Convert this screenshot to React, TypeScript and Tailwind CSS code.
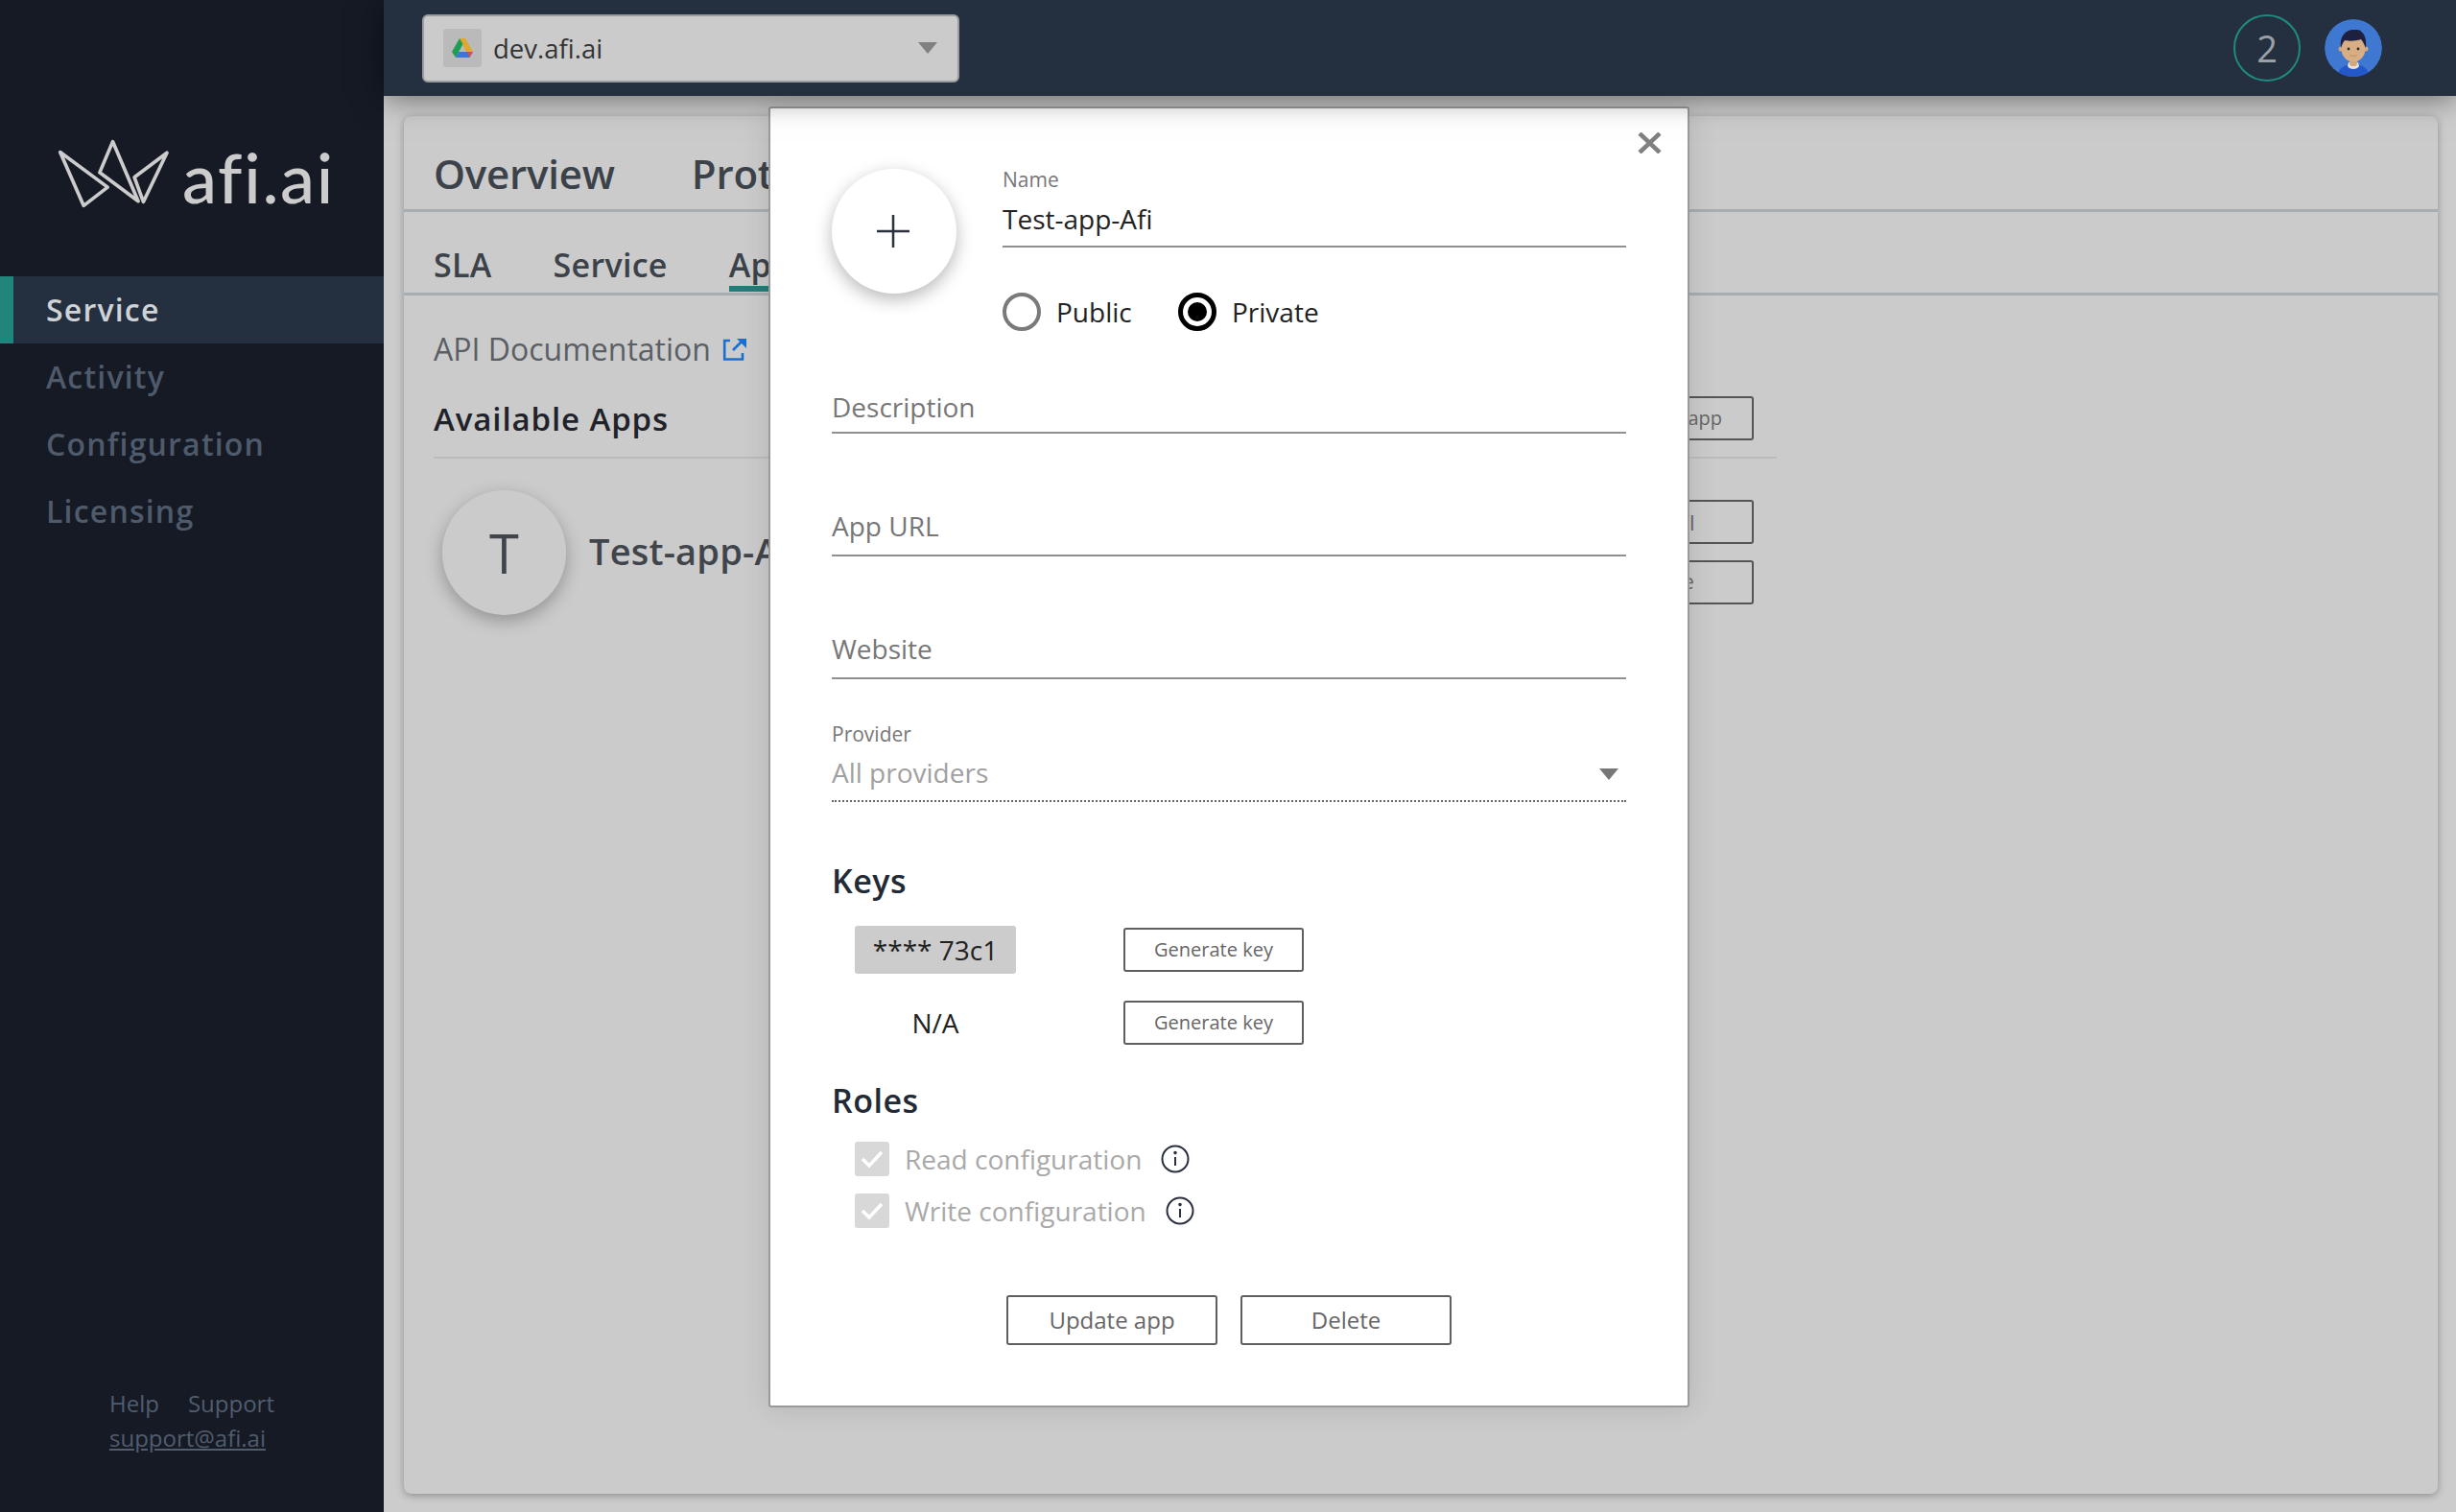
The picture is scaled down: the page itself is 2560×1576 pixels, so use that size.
const navItems = ["Service", "Activity", "Configuration", "Licensing"];

const CrownLogo = () => (
  <svg width="123" height="77" viewBox="50 70 370 230" fill="none" stroke="#cccccc" strokeWidth="11" strokeLinejoin="round">
    <path d="M67 116 L216 226 L141 284 Z" />
    <path d="M232 83 L312 270 L191 180 Z" />
    <path d="M402 118 L328 272 L300 195 Z" />
  </svg>
);

const DriveIcon = () => (
  <svg width="22" height="20" viewBox="0 0 22 20">
    <path d="M8 0 H14 L22 14 H15 Z" fill="#e0a830" />
    <path d="M7 14 H22 L18 20 H4 Z" fill="#3b77d9" />
    <path d="M16 14 H22 L18.5 20 Z" fill="#d9503f" />
    <path d="M8 0 L11.5 6 L4 20 L0 14 Z" fill="#1f9d55" />
  </svg>
);

const ExternalIcon = () => (
  <svg width="26" height="25" viewBox="0 0 26 25" fill="none" stroke="#1a6fd0" strokeWidth="2.6">
    <path d="M8 3 H2.2 V22.5 H21 V16" />
    <path d="M11 13 L20 4" />
    <path d="M15 1 H25 V11 Z" fill="#1a6fd0" stroke="none" />
  </svg>
);

const Avatar = () => (
  <svg width="60" height="60" viewBox="0 0 60 60" className="rounded-full">
    <circle cx="30" cy="30" r="30" fill="#3f78d0" />
    <path d="M13 60 C14 51 21 47 30 47 C39 47 46 51 47 60 Z" fill="#2458c8" />
    <path d="M24 49 C26 53 34 53 36 49 L35 45 H25 Z" fill="#e8e4dc" />
    <rect x="26" y="38" width="8" height="11" rx="3" fill="#d2a77e" />
    <circle cx="17" cy="31" r="2.5" fill="#d2a77e" />
    <circle cx="43" cy="31" r="2.5" fill="#d2a77e" />
    <ellipse cx="30" cy="31" rx="12.5" ry="13.5" fill="#d8ae84" />
    <path d="M17 30 C15 18 22 11 30 11 C33 11 38 11 38 13 C42 15 44 22 43 30 C41 26 40 23 38 21 C32 23 24 23 21 22 C19 24 18 27 17 30 Z" fill="#1e2040" />
    <circle cx="25" cy="31" r="1.4" fill="#2a2a3a" />
    <circle cx="35" cy="31" r="1.4" fill="#2a2a3a" />
    <path d="M26 37 C28 39 32 39 34 37" stroke="#c08f68" strokeWidth="1" fill="none" />
  </svg>
);

const Caret = ({ color }: { color: string }) => (
  <svg width="20" height="12" viewBox="0 0 20 12">
    <path d="M0 0 H20 L10 12 Z" fill={color} />
  </svg>
);

const InfoIcon = () => (
  <svg width="30" height="30" viewBox="0 0 30 30" fill="none" stroke="#2a3040" strokeWidth="2">
    <circle cx="15" cy="15" r="13.5" />
    <path d="M15 13 V22" />
    <circle cx="15" cy="8.6" r="0.8" fill="#2a3040" />
  </svg>
);

const CheckIcon = () => (
  <svg width="24" height="20" viewBox="0 0 24 20" fill="none" stroke="#ffffff" strokeWidth="3.5">
    <path d="M2 10 L9 17 L22 3" />
  </svg>
);

const OutlineBtn = ({ label, className }: { label: string; className: string }) => (
  <button className={`flex items-center justify-center whitespace-nowrap rounded-[3px] border-2 border-[#5f5f5f] text-[#666666] ${className}`}>
    {label}
  </button>
);

const Field = ({ label, className }: { label: string; className: string }) => (
  <div className={`flex items-center border-b-2 border-[#8f8f8f] text-[28px] text-[#777777] ${className}`}>
    {label}
  </div>
);

const RoleRow = ({ label, className }: { label: string; className: string }) => (
  <div className={`flex h-9 items-center pl-6 ${className}`}>
    <div className="flex h-9 w-9 items-center justify-center rounded-[3px] bg-[#d8d8d8]">
      <CheckIcon />
    </div>
    <span className="ml-4 text-[28px] text-[#a9a9a9]">{label}</span>
    <span className="ml-5 flex">
      <InfoIcon />
    </span>
  </div>
);

const AppModal = () => (
  <div className="absolute left-[801px] top-[111px] h-[1356px] w-[960px] rounded-[3px] border-2 border-[#9a9a9a] bg-white px-[64px] pt-[63px] shadow-[0_0_30px_rgba(0,0,0,0.12)]">
    <svg className="absolute left-[904px] top-[25px]" width="25" height="22" viewBox="0 0 25 22" stroke="#808080" strokeWidth="4.5">
      <path d="M2 1 L23 21 M23 1 L2 21" />
    </svg>

    <div className="flex gap-[48px]">
      <div className="flex h-[130px] w-[130px] shrink-0 items-center justify-center rounded-full bg-white pr-[2px] shadow-[0_6px_18px_rgba(0,0,0,0.28)]">
        <svg width="34" height="34" viewBox="0 0 34 34" stroke="#2a3040" strokeWidth="2.5">
          <path d="M17 0 V34 M0 17 H34" />
        </svg>
      </div>
      <div className="flex-1">
        <div className="mt-[-1px] h-[25px] text-[21px] leading-6 text-[#777777]">Name</div>
        <div className="flex h-[58px] items-center border-b-2 border-[#8f8f8f] text-[28px] text-[#222222]">Test-app-Afi</div>
        <div className="mt-[47px] flex h-10 items-center text-[28px] text-[#222222]">
          <span className="h-10 w-10 rounded-full border-4 border-[#7a7a7a]" />
          <span className="ml-[16px] w-[127px]">Public</span>
          <span className="flex h-10 w-10 items-center justify-center rounded-full border-[5px] border-black">
            <span className="h-5 w-5 rounded-full bg-black" />
          </span>
          <span className="ml-[16px]">Private</span>
        </div>
      </div>
    </div>

    <Field label="Description" className="mt-[53px] h-[54px]" />
    <Field label="App URL" className="mt-[68px] h-[60px] pb-[2px]" />
    <Field label="Website" className="mt-[66px] h-[62px]" />

    <div className="mt-[45px] h-6 text-[21px] leading-6 text-[#777777]">Provider</div>
    <div className="flex h-[59px] items-center justify-between border-b-2 border-dotted border-[#666666] pb-[2px] pr-[8px] text-[28px] text-[#a0a0a0]">
      All providers
      <span className="mt-[4px] flex">
        <Caret color="#777777" />
      </span>
    </div>

    <div className="mt-[60px] flex h-11 items-center text-[34px] font-semibold tracking-[0.5px] text-[#222a35]">Keys</div>
    <div className="mt-[25px] flex items-center pl-6">
      <div className="flex h-[50px] w-[168px] items-center justify-center rounded-[3px] bg-[#cccccc] text-[28px] text-[#222222]">**** 73c1</div>
      <OutlineBtn label="Generate key" className="ml-[112px] h-[46px] w-[188px] text-[20px]" />
    </div>
    <div className="mt-[28px] flex items-center pl-6">
      <div className="flex w-[168px] justify-center text-[28px] text-[#222222]">N/A</div>
      <OutlineBtn label="Generate key" className="ml-[112px] h-[46px] w-[188px] text-[20px]" />
    </div>

    <div className="mt-[36px] flex h-11 items-center text-[34px] font-semibold tracking-[0.5px] text-[#222a35]">Roles</div>
    <RoleRow label="Read configuration" className="mt-[21px]" />
    <RoleRow label="Write configuration" className="mt-[18px]" />

    <div className="mt-[70px] flex justify-center gap-6">
      <OutlineBtn label="Update app" className="h-[52px] w-[220px] text-[24px]" />
      <OutlineBtn label="Delete" className="h-[52px] w-[220px] text-[24px]" />
    </div>
  </div>
);

export default function App() {
  return (
    <div className="relative flex h-[1576px] w-[2560px] overflow-hidden bg-[#cccccc] font-['Open_Sans',sans-serif]">
      <aside className="flex w-[400px] shrink-0 flex-col bg-[#151a25]">
        <div className="flex h-[288px] items-start pl-[57px] pt-[143px]">
          <CrownLogo />
          <span className="ml-[10px] mt-[-2px] font-['Lato',sans-serif] text-[72px] font-medium leading-[86px] tracking-[1.7px] text-[#cccccc]">afi.ai</span>
        </div>
        <nav className="flex flex-col">
          {navItems.map((item, i) => (
            <div
              key={item}
              className={
                i === 0
                  ? "flex h-[70px] items-center border-l-[14px] border-[#22857d] bg-[#24303f] pl-[34px] text-[32px] font-semibold tracking-[1.2px] text-[#cfd2d6]"
                  : "flex h-[70px] items-center pl-[48px] text-[32px] font-semibold tracking-[1.2px] text-[#4f5a6b]"
              }
            >
              {item}
            </div>
          ))}
        </nav>
        <div className="mt-auto pb-[59px] pl-[114px] text-[24px] leading-[36px] text-[#515c6d]">
          <div className="flex gap-[30px]">
            <span>Help</span>
            <span>Support</span>
          </div>
          <div className="underline">support@afi.ai</div>
        </div>
      </aside>

      <div className="flex min-w-0 flex-1 flex-col">
        <header className="relative z-10 flex h-[100px] shrink-0 items-center bg-[#24303f] pl-[40px] pr-[77px] shadow-[0_2px_30px_rgba(0,0,0,0.5)]">
          <div className="flex h-[71px] w-[560px] items-center rounded-[6px] border-2 border-[#9a9da0] bg-[#cbcbcb] pl-[20px] pr-[21px]">
            <div className="flex h-10 w-10 items-center justify-center rounded-[3px] bg-[#bababa]">
              <DriveIcon />
            </div>
            <span className="ml-3 pt-[2px] text-[27.5px] text-[#333333]">dev.afi.ai</span>
            <span className="ml-auto flex">
              <Caret color="#808080" />
            </span>
          </div>
          <div className="ml-auto flex items-center gap-[25px]">
            <div className="flex h-[70px] w-[70px] items-center justify-center rounded-full border-2 border-[#1f8a80] text-[38px] text-[#9aa0a6]">2</div>
            <Avatar />
          </div>
        </header>

        <main className="flex min-h-0 flex-1 pb-[19px] pl-[21px] pr-[19px] pt-[21px]">
          <div className="flex flex-1 flex-col rounded-[8px] bg-[#cbcbcb] shadow-[0_2px_8px_rgba(0,0,0,0.3)]">
            <div className="flex h-[100px] items-center gap-[80px] border-b-[3px] border-[#a8adb2] pl-[31px] pt-[22px] text-[42px] font-semibold tracking-[-0.2px] text-[#3c4249]">
              <span>Overview</span>
              <span>Protection</span>
            </div>
            <div className="flex h-[87px] gap-[64px] border-b-[3px] border-[#a8adb2] pl-[31px] text-[34px] font-semibold tracking-[0.3px] text-[#3c4249]">
              <span className="pt-[30px]">SLA</span>
              <span className="pt-[30px]">Service</span>
              <span className="mb-[1px] border-b-[6px] border-[#1f7f78] pt-[30px]">Apps</span>
            </div>
            <div className="px-[31px]">
              <div className="mt-[32px] flex items-center gap-[12px] text-[32px] text-[#5a5f66]">
                API Documentation
                <ExternalIcon />
              </div>
              <div className="mt-[24px] flex h-[66px] w-[1400px] items-start justify-between border-b-2 border-[#bcbcbc] pr-[24px]">
                <span className="text-[33px] font-semibold tracking-[0.9px] text-[#1f2329]">Available Apps</span>
                <OutlineBtn label="Add new app" className="mt-[1px] h-[46px] w-[188px] border-[#555555] text-[20px]" />
              </div>
              <div className="mt-[33px] flex w-[1376px] items-start">
                <div className="ml-[9px] flex h-[130px] w-[129px] items-center justify-center rounded-full bg-[#cbcbcb] text-[56px] text-[#40454c] shadow-[0_6px_18px_rgba(0,0,0,0.28)]">T</div>
                <span className="ml-[24px] mt-[35px] text-[38px] font-semibold tracking-[0.2px] text-[#40454c]">Test-app-Afi</span>
                <div className="ml-auto flex flex-col gap-[17px] pt-[10px]">
                  <OutlineBtn label="Install" className="h-[46px] w-[188px] border-[#555555] pl-[4px] text-[22px]" />
                  <OutlineBtn label="Delete" className="h-[46px] w-[188px] border-[#555555] text-[21px]" />
                </div>
              </div>
            </div>
          </div>
        </main>
      </div>

      <AppModal />
    </div>
  );
}
